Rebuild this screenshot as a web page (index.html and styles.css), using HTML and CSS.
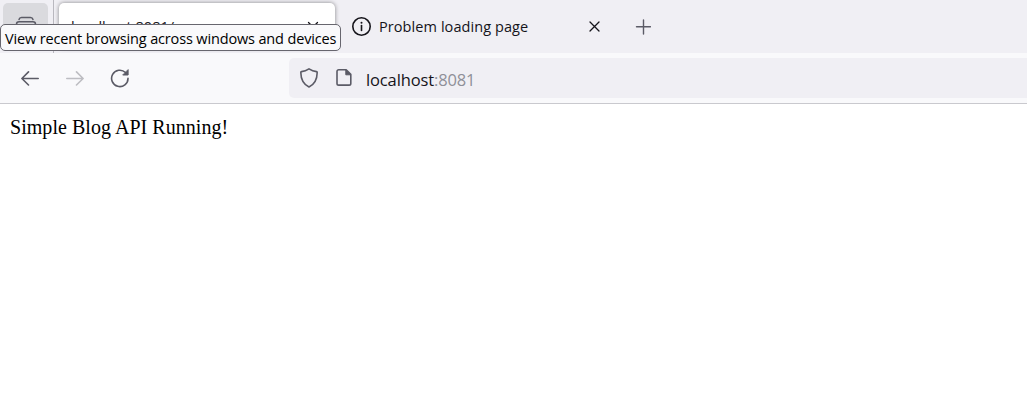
FILE: index.html
```html
<!DOCTYPE html>
<html lang="en">
<head>
<meta charset="utf-8">
<title>localhost:8081</title>
<link rel="stylesheet" href="styles.css">
</head>
<body>
<header class="tabs">
  <div class="recent">
    <svg width="22" height="20" viewBox="0 0 22 20" fill="none" stroke="#5b5b66" stroke-width="1.5" stroke-linecap="round"><path d="M4 3.5Q4.500 1.500 6.500 1.500h9Q17.500 1.500 18 3.500"/><rect x="1.500" y="5.800" width="19" height="12" rx="2.500"/></svg>
  </div>
  <div class="divider"></div>
  <div class="tab active">
    <span class="active-title">localhost:8081/</span>
    <svg class="close" width="12" height="12" viewBox="0 0 12 12" fill="none" stroke="#15141a" stroke-width="1.3" stroke-linecap="round"><path d="M1.500 1.500l9 9m0-9l-9 9"/></svg>
  </div>
  <div class="tab second">
    <svg width="20" height="20" viewBox="0 0 20 20" fill="none" stroke="#15141a" stroke-width="1.600"><circle cx="9.500" cy="9.500" r="8.700"/><path d="M9.500 8.500v5" stroke-linecap="round"/><circle cx="9.500" cy="5.700" r="1" fill="#15141a" stroke="none"/></svg>
    <span class="tab-title">Problem loading page</span>
    <svg class="close" width="12" height="12" viewBox="0 0 12 12" fill="none" stroke="#15141a" stroke-width="1.300" stroke-linecap="round"><path d="M2 1l9 9m0-9l-9 9"/></svg>
  </div>
  <svg class="plus" width="16" height="16" viewBox="0 0 16 16" fill="none" stroke="#5b5b66" stroke-width="1.400" stroke-linecap="round"><path d="M8.500 1v14M1.500 7.700h14"/></svg>
  <div class="tooltip"><span class="tooltip-text">View recent browsing across windows and devices</span></div>
</header>
<nav class="toolbar">
  <svg class="back" width="20" height="16" viewBox="0 0 20 16" fill="none" stroke="#5b5b66" stroke-width="1.600" stroke-linecap="round" stroke-linejoin="round"><path d="M18.200 8.500H2m6.500-6.600L1.900 8.500l6.600 6.500"/></svg>
  <svg class="forward" width="20" height="16" viewBox="0 0 20 16" fill="none" stroke="#bdbdc2" stroke-width="1.600" stroke-linecap="round" stroke-linejoin="round"><path d="M1.800 8.500H18m-6.500-6.600L18.100 8.500l-6.600 6.500"/></svg>
  <svg class="reload" width="20" height="20" viewBox="0 0 20 20" fill="none" stroke="#5b5b66" stroke-width="1.600" stroke-linecap="round"><path d="M18 10.300A8.200 8.200 0 1 1 15.500 4.500"/><path d="M18.100 2v5h-5z" fill="#5b5b66" stroke-width="1" stroke-linejoin="round"/></svg>
  <div class="url">
    <svg class="shield" width="20" height="22" viewBox="0 0 20 22" fill="none" stroke="#5b5b66" stroke-width="1.600" stroke-linejoin="round"><path d="M10 1.800Q13.600 4.100 17.500 4.600Q18.200 4.700 18.200 5.500C18.100 12.600 15.500 17.400 10 19.900C4.500 17.400 1.900 12.600 1.800 5.500Q1.800 4.700 2.500 4.600Q6.400 4.100 10 1.800z"/></svg>
    <svg class="page" width="16" height="20" viewBox="0 0 16 20" fill="none" stroke="#5b5b66" stroke-width="1.600" stroke-linejoin="round"><path d="M2.700 1.800h7.500l4.600 4.600v9a1.700 1.700 0 0 1-1.700 1.700H2.700a1.700 1.700 0 0 1-1.700-1.700V3.500a1.700 1.700 0 0 1 1.700-1.700z"/><path d="M9.800 2v4.800H14.700z" fill="#5b5b66" stroke-width="1"/></svg>
    <span class="address">localhost<span class="port">:8081</span></span>
  </div>
</nav>
<main class="content">Simple Blog API Running!</main>
</body>
</html>
```
FILE: styles.css
```css
body { margin: 0; height: 400px; overflow: hidden; background: #fff; font-family: "Open Sans", "Noto Sans", sans-serif; color: #15141a; }
svg { display: block; flex: none; }
.tabs { position: relative; display: flex; height: 53px; background: #f0eff4; box-sizing: border-box; }
.recent { width: 45px; height: 45px; margin: 3px 5px 0 3px; border-radius: 5px; background: #dadade; display: flex; justify-content: center; padding-top: 13px; box-sizing: border-box; }
.divider { width: 1px; height: 53px; background: #b9b8bf; }
.tab { display: flex; align-items: center; box-sizing: border-box; font-size: 14.5px; white-space: nowrap; }
.active { width: 276px; height: 45px; margin: 3px 0 0 5px; padding: 2px 16px 0 12px; border-radius: 5px; background: #fff; box-shadow: 0 0 4px rgba(0,0,0,.45); justify-content: space-between; }
.active-title { letter-spacing: 0; }
.second { width: 265px; height: 53px; padding: 0 0 0 17px; }
.tab-title { width: 210px; margin-left: 7px; letter-spacing: .08px; }
.plus { margin: 19px 0 0 35px; }
.tooltip { position: absolute; left: 0; top: 24px; width: 341px; height: 27px; box-sizing: border-box; border: 1px solid #67666e; border-radius: 5px; background: #f9f9fb; padding-left: 4px; font-size: 14.5px; line-height: 27px; white-space: nowrap; color: #000; }
.tooltip-text { letter-spacing: -.15px; }
.toolbar { display: flex; height: 51px; box-sizing: border-box; background: #f9f9fb; border-bottom: 1px solid #c9c9ce; padding: 5px 0 5px 20px; }
.back { margin-top: 12px; }
.forward { margin: 12px 0 0 25px; }
.reload { margin: 10px 0 0 25px; }
.url { display: flex; flex: 1; margin-left: 159px; height: 40px; background: #f0eff4; border-radius: 5px 0 0 5px; padding-left: 10px; }
.shield { margin-top: 9px; }
.page { margin: 10px 0 0 17px; }
.address { margin-left: 14px; font-size: 16.5px; line-height: 43px; letter-spacing: -.13px; }
.port { color: #8f8f98; }
.content { padding: 12px 10px; font: 20px/22px "Liberation Serif", serif; letter-spacing: .04px; color: #000; }
```
